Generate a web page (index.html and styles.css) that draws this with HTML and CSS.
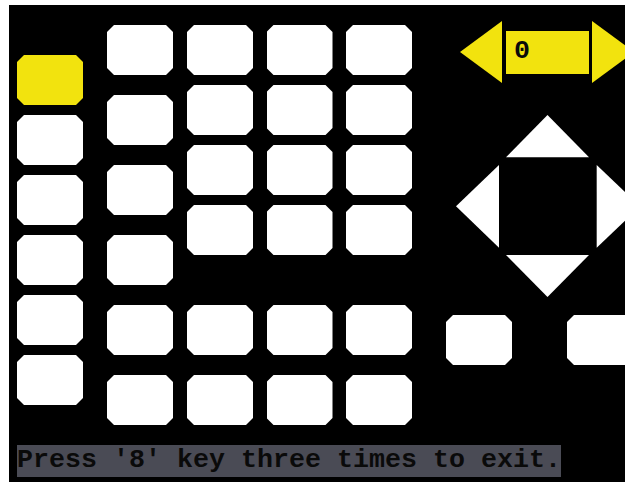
FILE: index.html
```html
<!DOCTYPE html>
<html>
<head>
<meta charset="utf-8">
<link rel="stylesheet" href="styles.css">
</head>
<body>
<div class="screen">
  <div class="main">
    <div class="col col-left">
      <div class="key key-active"></div>
      <div class="key"></div>
      <div class="key"></div>
      <div class="key"></div>
      <div class="key"></div>
      <div class="key"></div>
    </div>
    <div class="col col-second">
      <div class="key"></div>
      <div class="key"></div>
      <div class="key"></div>
      <div class="key"></div>
      <div class="key"></div>
      <div class="key"></div>
    </div>
    <div class="block">
      <div class="grid grid-top">
        <div class="key"></div><div class="key"></div><div class="key"></div>
        <div class="key"></div><div class="key"></div><div class="key"></div>
        <div class="key"></div><div class="key"></div><div class="key"></div>
        <div class="key"></div><div class="key"></div><div class="key"></div>
      </div>
      <div class="grid grid-bottom">
        <div class="key"></div><div class="key"></div><div class="key"></div>
        <div class="key"></div><div class="key"></div><div class="key"></div>
      </div>
    </div>
    <div class="side">
      <div class="selector">
        <div class="tri tri-left"></div>
        <div class="value">0</div>
        <div class="tri tri-right"></div>
      </div>
      <svg class="dpad" width="184" height="182" viewBox="0 0 184 182">
        <polygon points="50,42.3 133,42.3 91.5,0" fill="#fff"/>
        <polygon points="0,91.3 43,50 43,132.7" fill="#fff"/>
        <polygon points="140.7,50 184,91.3 140.7,132.7" fill="#fff"/>
        <polygon points="50,140 133,140 91.5,182" fill="#fff"/>
      </svg>
      <div class="side-keys">
        <div class="key"></div>
        <div class="key"></div>
      </div>
    </div>
  </div>
  <div class="status"><span class="status-text">Press '8' key three times to exit.</span></div>
</div>
</body>
</html>
```
FILE: styles.css
```css
html, body {
  margin: 0;
  padding: 0;
  width: 625px;
  height: 482px;
  overflow: hidden;
  background: #fff;
}

.screen {
  margin: 5px 0 0 9px;
  width: 640px;
  height: 480px;
  padding-left: 8px;
  box-sizing: border-box;
  background: #000;
  overflow: hidden;
}

.main {
  display: flex;
  align-items: flex-start;
  height: 420px;
}

.key {
  width: 66px;
  height: 50px;
  background: #fff;
  clip-path: polygon(7px 0, calc(100% - 7px) 0, 100% 7px, 100% calc(100% - 7px), calc(100% - 7px) 100%, 7px 100%, 0 calc(100% - 7px), 0 7px);
}

.key-active {
  background: #f2e30e;
}

.col {
  display: flex;
  flex-direction: column;
  flex-shrink: 0;
}

.col-left {
  gap: 10px;
  margin-top: 50px;
}

.col-second {
  gap: 20px;
  margin-top: 20px;
  margin-left: 24px;
}

.block {
  margin-left: 14px;
  margin-top: 20px;
  flex-shrink: 0;
}

.grid {
  display: grid;
  grid-template-columns: repeat(3, 66px);
  column-gap: 13.5px;
}

.grid-top {
  row-gap: 10px;
}

.grid-bottom {
  row-gap: 20px;
  margin-top: 50px;
}

.side {
  margin-left: 34px;
  width: 203px;
  flex-shrink: 0;
  display: flex;
  flex-direction: column;
  align-items: flex-start;
}

.selector {
  display: flex;
  align-items: center;
  margin-top: 16px;
  margin-left: 14px;
}

.tri {
  width: 42px;
  height: 62px;
  background: #f2e30e;
  flex-shrink: 0;
}

.tri-left {
  clip-path: polygon(0 50%, 100% 0, 100% 100%);
  margin-right: 4px;
}

.tri-right {
  clip-path: polygon(0 0, 100% 50%, 0 100%);
  margin-left: 3px;
}

.value {
  width: 83px;
  height: 43px;
  box-sizing: border-box;
  padding-left: 8px;
  background: #f2e30e;
  color: #0a0a0a;
  font-family: "Liberation Mono", monospace;
  font-weight: bold;
  font-size: 26.67px;
  line-height: 40px;
}

.dpad {
  display: block;
  margin-top: 32px;
  margin-left: 10px;
}

.side-keys {
  display: flex;
  gap: 55px;
  margin-top: 18px;
}

.status {
  margin-top: 20px;
  height: 32px;
}

.status-text {
  display: inline-block;
  height: 32px;
  background: #4a4b55;
  color: #0a0a0a;
  font-family: "Liberation Mono", monospace;
  font-weight: bold;
  font-size: 26.67px;
  line-height: 31px;
  white-space: pre;
}
```
